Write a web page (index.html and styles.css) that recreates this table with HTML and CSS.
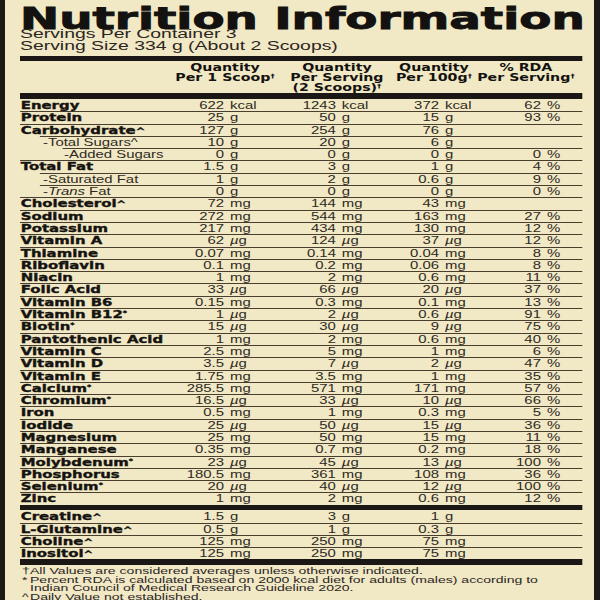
FILE: index.html
```html
<!DOCTYPE html>
<html lang="en">
<head>
<meta charset="utf-8">
<title>Nutrition Information</title>
<link rel="stylesheet" href="styles.css">
</head>
<body>
<div class="label">
  <h1 class="title">Nutrition Information</h1>
  <div class="serving">
    <div>Servings Per Container 3</div>
    <div>Serving Size 334 g (About 2 Scoops)</div>
  </div>
  <div class="sheet">
    <div class="bar"></div>
    <div class="head">
      <div></div>
      <div>Quantity<br>Per 1 Scoop<sup>†</sup></div>
      <div>Quantity<br>Per Serving<br>(2 Scoops)<sup>†</sup></div>
      <div>Quantity<br>Per 100g<sup>†</sup></div>
      <div>% RDA<br>Per Serving<sup>†</sup></div>
    </div>
    <div class="bar"></div>
    <div class="rows">
      <div class="row"><span class="n">Energy</span><span class="v">622</span><span class="u">kcal</span><span class="v">1243</span><span class="u">kcal</span><span class="v">372</span><span class="u">kcal</span><span class="v">62</span><span class="u">%</span></div>
      <div class="row"><span class="n">Protein</span><span class="v">25</span><span class="u">g</span><span class="v">50</span><span class="u">g</span><span class="v">15</span><span class="u">g</span><span class="v">93</span><span class="u">%</span></div>
      <div class="row"><span class="n">Carbohydrate<span class="car">^</span></span><span class="v">127</span><span class="u">g</span><span class="v">254</span><span class="u">g</span><span class="v">76</span><span class="u">g</span></div>
      <div class="row sub1"><span class="s">-Total Sugars^</span><span class="v">10</span><span class="u">g</span><span class="v">20</span><span class="u">g</span><span class="v">6</span><span class="u">g</span></div>
      <div class="row sub2"><span class="s">-Added Sugars</span><span class="v">0</span><span class="u">g</span><span class="v">0</span><span class="u">g</span><span class="v">0</span><span class="u">g</span><span class="v">0</span><span class="u">%</span></div>
      <div class="row"><span class="n">Total Fat</span><span class="v">1.5</span><span class="u">g</span><span class="v">3</span><span class="u">g</span><span class="v">1</span><span class="u">g</span><span class="v">4</span><span class="u">%</span></div>
      <div class="row sub1"><span class="s">-Saturated Fat</span><span class="v">1</span><span class="u">g</span><span class="v">2</span><span class="u">g</span><span class="v">0.6</span><span class="u">g</span><span class="v">9</span><span class="u">%</span></div>
      <div class="row sub1"><span class="s">-<i>Trans</i> Fat</span><span class="v">0</span><span class="u">g</span><span class="v">0</span><span class="u">g</span><span class="v">0</span><span class="u">g</span><span class="v">0</span><span class="u">%</span></div>
      <div class="row"><span class="n">Cholesterol<span class="car">^</span></span><span class="v">72</span><span class="u">mg</span><span class="v">144</span><span class="u">mg</span><span class="v">43</span><span class="u">mg</span></div>
      <div class="row"><span class="n">Sodium</span><span class="v">272</span><span class="u">mg</span><span class="v">544</span><span class="u">mg</span><span class="v">163</span><span class="u">mg</span><span class="v">27</span><span class="u">%</span></div>
      <div class="row"><span class="n">Potassium</span><span class="v">217</span><span class="u">mg</span><span class="v">434</span><span class="u">mg</span><span class="v">130</span><span class="u">mg</span><span class="v">12</span><span class="u">%</span></div>
      <div class="row"><span class="n">Vitamin A</span><span class="v">62</span><span class="u"><i>µ</i>g</span><span class="v">124</span><span class="u"><i>µ</i>g</span><span class="v">37</span><span class="u"><i>µ</i>g</span><span class="v">12</span><span class="u">%</span></div>
      <div class="row"><span class="n">Thiamine</span><span class="v">0.07</span><span class="u">mg</span><span class="v">0.14</span><span class="u">mg</span><span class="v">0.04</span><span class="u">mg</span><span class="v">8</span><span class="u">%</span></div>
      <div class="row"><span class="n">Riboflavin</span><span class="v">0.1</span><span class="u">mg</span><span class="v">0.2</span><span class="u">mg</span><span class="v">0.06</span><span class="u">mg</span><span class="v">8</span><span class="u">%</span></div>
      <div class="row"><span class="n">Niacin</span><span class="v">1</span><span class="u">mg</span><span class="v">2</span><span class="u">mg</span><span class="v">0.6</span><span class="u">mg</span><span class="v">11</span><span class="u">%</span></div>
      <div class="row"><span class="n">Folic Acid</span><span class="v">33</span><span class="u"><i>µ</i>g</span><span class="v">66</span><span class="u"><i>µ</i>g</span><span class="v">20</span><span class="u"><i>µ</i>g</span><span class="v">37</span><span class="u">%</span></div>
      <div class="row"><span class="n">Vitamin B6</span><span class="v">0.15</span><span class="u">mg</span><span class="v">0.3</span><span class="u">mg</span><span class="v">0.1</span><span class="u">mg</span><span class="v">13</span><span class="u">%</span></div>
      <div class="row"><span class="n">Vitamin B12<sup>*</sup></span><span class="v">1</span><span class="u"><i>µ</i>g</span><span class="v">2</span><span class="u"><i>µ</i>g</span><span class="v">0.6</span><span class="u"><i>µ</i>g</span><span class="v">91</span><span class="u">%</span></div>
      <div class="row"><span class="n">Biotin<sup>*</sup></span><span class="v">15</span><span class="u"><i>µ</i>g</span><span class="v">30</span><span class="u"><i>µ</i>g</span><span class="v">9</span><span class="u"><i>µ</i>g</span><span class="v">75</span><span class="u">%</span></div>
      <div class="row"><span class="n">Pantothenic Acid</span><span class="v">1</span><span class="u">mg</span><span class="v">2</span><span class="u">mg</span><span class="v">0.6</span><span class="u">mg</span><span class="v">40</span><span class="u">%</span></div>
      <div class="row"><span class="n">Vitamin C</span><span class="v">2.5</span><span class="u">mg</span><span class="v">5</span><span class="u">mg</span><span class="v">1</span><span class="u">mg</span><span class="v">6</span><span class="u">%</span></div>
      <div class="row"><span class="n">Vitamin D</span><span class="v">3.5</span><span class="u"><i>µ</i>g</span><span class="v">7</span><span class="u"><i>µ</i>g</span><span class="v">2</span><span class="u"><i>µ</i>g</span><span class="v">47</span><span class="u">%</span></div>
      <div class="row"><span class="n">Vitamin E</span><span class="v">1.75</span><span class="u">mg</span><span class="v">3.5</span><span class="u">mg</span><span class="v">1</span><span class="u">mg</span><span class="v">35</span><span class="u">%</span></div>
      <div class="row"><span class="n">Calcium<sup>*</sup></span><span class="v">285.5</span><span class="u">mg</span><span class="v">571</span><span class="u">mg</span><span class="v">171</span><span class="u">mg</span><span class="v">57</span><span class="u">%</span></div>
      <div class="row"><span class="n">Chromium<sup>*</sup></span><span class="v">16.5</span><span class="u"><i>µ</i>g</span><span class="v">33</span><span class="u"><i>µ</i>g</span><span class="v">10</span><span class="u"><i>µ</i>g</span><span class="v">66</span><span class="u">%</span></div>
      <div class="row"><span class="n">Iron</span><span class="v">0.5</span><span class="u">mg</span><span class="v">1</span><span class="u">mg</span><span class="v">0.3</span><span class="u">mg</span><span class="v">5</span><span class="u">%</span></div>
      <div class="row"><span class="n">Iodide</span><span class="v">25</span><span class="u"><i>µ</i>g</span><span class="v">50</span><span class="u"><i>µ</i>g</span><span class="v">15</span><span class="u"><i>µ</i>g</span><span class="v">36</span><span class="u">%</span></div>
      <div class="row"><span class="n">Magnesium</span><span class="v">25</span><span class="u">mg</span><span class="v">50</span><span class="u">mg</span><span class="v">15</span><span class="u">mg</span><span class="v">11</span><span class="u">%</span></div>
      <div class="row"><span class="n">Manganese</span><span class="v">0.35</span><span class="u">mg</span><span class="v">0.7</span><span class="u">mg</span><span class="v">0.2</span><span class="u">mg</span><span class="v">18</span><span class="u">%</span></div>
      <div class="row"><span class="n">Molybdenum<sup>*</sup></span><span class="v">23</span><span class="u"><i>µ</i>g</span><span class="v">45</span><span class="u"><i>µ</i>g</span><span class="v">13</span><span class="u"><i>µ</i>g</span><span class="v">100</span><span class="u">%</span></div>
      <div class="row"><span class="n">Phosphorus</span><span class="v">180.5</span><span class="u">mg</span><span class="v">361</span><span class="u">mg</span><span class="v">108</span><span class="u">mg</span><span class="v">36</span><span class="u">%</span></div>
      <div class="row"><span class="n">Selenium<sup>*</sup></span><span class="v">20</span><span class="u"><i>µ</i>g</span><span class="v">40</span><span class="u"><i>µ</i>g</span><span class="v">12</span><span class="u"><i>µ</i>g</span><span class="v">100</span><span class="u">%</span></div>
      <div class="row"><span class="n">Zinc</span><span class="v">1</span><span class="u">mg</span><span class="v">2</span><span class="u">mg</span><span class="v">0.6</span><span class="u">mg</span><span class="v">12</span><span class="u">%</span></div>
    </div>
    <div class="bar"></div>
    <div class="rows">
      <div class="row"><span class="n">Creatine<span class="car">^</span></span><span class="v">1.5</span><span class="u">g</span><span class="v">3</span><span class="u">g</span><span class="v">1</span><span class="u">g</span></div>
      <div class="row"><span class="n">L-Glutamine<span class="car">^</span></span><span class="v">0.5</span><span class="u">g</span><span class="v">1</span><span class="u">g</span><span class="v">0.3</span><span class="u">g</span></div>
      <div class="row"><span class="n">Choline<span class="car">^</span></span><span class="v">125</span><span class="u">mg</span><span class="v">250</span><span class="u">mg</span><span class="v">75</span><span class="u">mg</span></div>
      <div class="row"><span class="n">Inositol<span class="car">^</span></span><span class="v">125</span><span class="u">mg</span><span class="v">250</span><span class="u">mg</span><span class="v">75</span><span class="u">mg</span></div>
    </div>
    <div class="bar"></div>
    <div class="notes">
      <div class="note"><span class="mk">†</span><span>All Values are considered averages unless otherwise indicated.</span></div>
      <div class="note"><span class="mk">*</span><span>Percent RDA is calculated based on 2000 kcal diet for adults (males) according to<br>Indian Council of Medical Research Guideline 2020.</span></div>
      <div class="note"><span class="mk">^</span><span>Daily Value not established.</span></div>
    </div>
  </div>
</div>
</body>
</html>
```

FILE: styles.css
```css
html, body {
  margin: 0;
  height: 600px;
  overflow: hidden;
  background: #1d1a16;
}

body {
  font-family: "Liberation Sans", Arial, sans-serif;
  color: #2e2a23;
}

.label {
  margin-left: 5px;
  width: 574px;
  height: 600px;
  padding-left: 15px;
  overflow: hidden;
  background: #f1e8c5;
}

.title {
  margin: 0;
  padding-top: 6.2px;
  font: bold 30px/26px "DejaVu Sans", sans-serif;
  color: #141210;
  -webkit-text-stroke: 0.9px #141210;
  white-space: nowrap;
  transform: scaleX(1.56);
  transform-origin: 0 0;
}

.serving {
  margin-top: -2.9px;
  font-size: 12px;
  line-height: 11.8px;
  white-space: nowrap;
  color: #2a251e;
  transform: scaleX(1.615);
  transform-origin: 0 0;
}

.sheet {
  width: 395.8px;
  margin-top: 3.1px;
  transform: scaleX(1.42);
  transform-origin: 0 0;
}

.bar {
  height: 5.5px;
  background: #1a1714;
}

.head {
  display: grid;
  grid-template-columns: 104.4px 80px 77.6px 59px 70.6px;
  padding: 1.3px 0 0.7px;
  font: bold 10px/10px "DejaVu Sans", sans-serif;
  text-align: center;
  white-space: nowrap;
  color: #141210;
}

.head sup {
  font-size: 6px;
  line-height: 0;
  vertical-align: 3px;
}

.row {
  --in: 0px;
  display: grid;
  grid-template-columns: calc(100px - var(--in)) 43.7px 32px 46.8px 32px 40.6px 32px 39.8px 28.9px;
  margin-left: var(--in);
  height: 12.3px;
  box-sizing: border-box;
  border-top: 1px solid #4a3f2e;
  font-size: 10.5px;
  line-height: 11.3px;
  white-space: nowrap;
}

.row:first-child {
  border-top-color: transparent;
}

.sub1 {
  --in: 14.1px;
}

.sub2 {
  --in: 30.3px;
}

.n {
  padding-left: 0.5px;
  font-family: "DejaVu Sans", sans-serif;
  font-weight: bold;
  color: #151310;
  -webkit-text-stroke: 0.35px #151310;
}

.n sup {
  font-size: 6px;
  line-height: 0;
  vertical-align: 3px;
  font-weight: normal;
}

.car {
  font-size: 8px;
}

.sub1 .s {
  padding-left: 2.1px;
}

.sub2 .s {
  padding-left: 0.7px;
}

.v {
  text-align: right;
}

.u {
  padding-left: 4.2px;
}

.notes {
  width: 359.8px;
  padding-top: 2px;
  font-size: 9px;
  line-height: 8.7px;
  color: #2a251e;
  transform: scaleX(1.1);
  transform-origin: 0 0;
}

.note {
  display: flex;
  white-space: nowrap;
}

.mk {
  flex: none;
  width: 6.4px;
  padding-left: 1.3px;
  box-sizing: border-box;
}
```
